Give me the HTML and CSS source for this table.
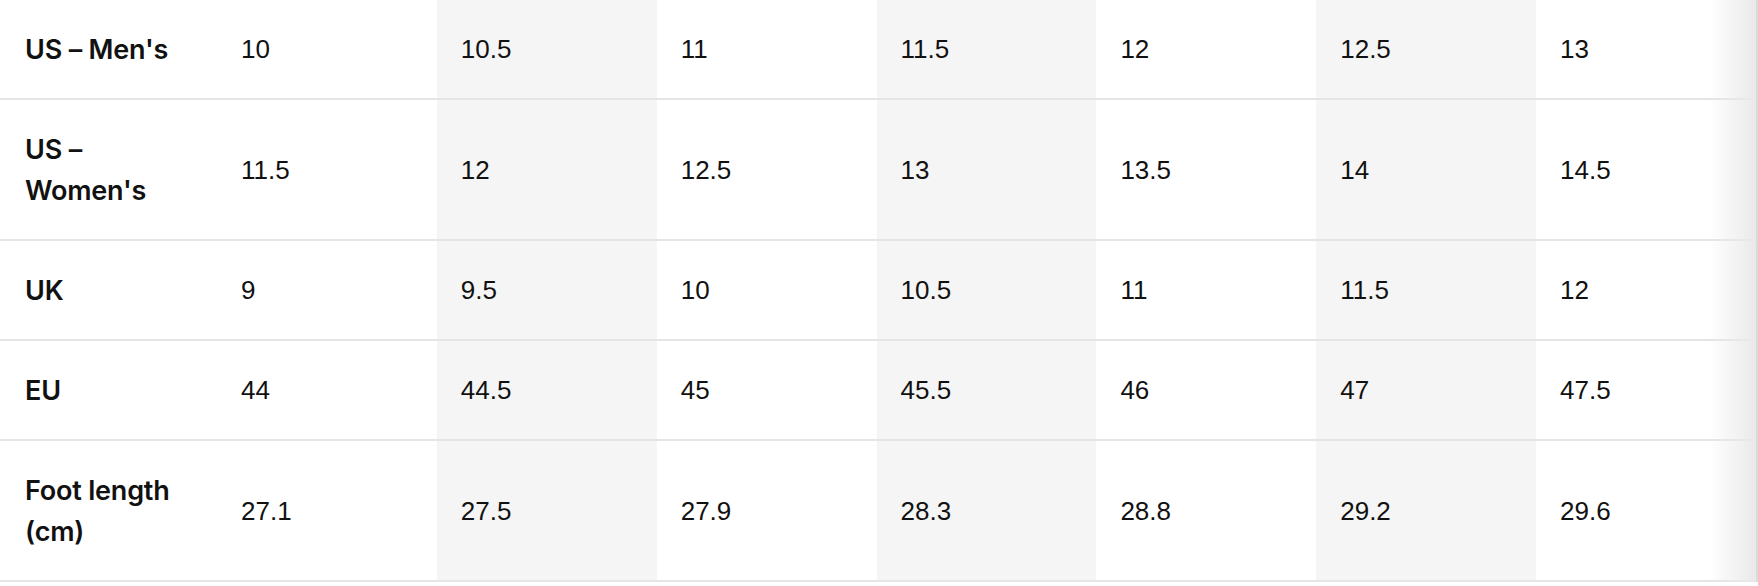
FILE: index.html
```html
<!DOCTYPE html>
<html lang="en">
<head>
<meta charset="utf-8">
<title>Size chart</title>
<link rel="stylesheet" href="styles.css">
</head>
<body>
<div class="chart">
  <table class="sizes">
    <colgroup>
      <col class="col-label">
      <col class="col-data">
      <col class="col-data alt">
      <col class="col-data">
      <col class="col-data alt">
      <col class="col-data">
      <col class="col-data alt">
      <col class="col-data">
    </colgroup>
    <tbody>
      <tr>
        <th>US – Men's</th>
        <td>10</td><td>10.5</td><td>11</td><td>11.5</td><td>12</td><td>12.5</td><td>13</td>
      </tr>
      <tr>
        <th>US – Women's</th>
        <td>11.5</td><td>12</td><td>12.5</td><td>13</td><td>13.5</td><td>14</td><td>14.5</td>
      </tr>
      <tr>
        <th>UK</th>
        <td>9</td><td>9.5</td><td>10</td><td>10.5</td><td>11</td><td>11.5</td><td>12</td>
      </tr>
      <tr>
        <th>EU</th>
        <td>44</td><td>44.5</td><td>45</td><td>45.5</td><td>46</td><td>47</td><td>47.5</td>
      </tr>
      <tr>
        <th>Foot length (cm)</th>
        <td>27.1</td><td>27.5</td><td>27.9</td><td>28.3</td><td>28.8</td><td>29.2</td><td>29.6</td>
      </tr>
    </tbody>
  </table>
  <div class="fade"></div>
</div>
</body>
</html>
```

FILE: styles.css
```css
html, body {
  margin: 0;
  padding: 0;
  background: #ffffff;
}

body {
  font-family: "Liberation Sans", Arial, Helvetica, sans-serif;
  color: #111111;
}

.chart {
  position: relative;
  width: 1756px;
  border-right: 2px solid #dadada;
}

.sizes {
  width: 1756px;
  border-collapse: separate;
  border-spacing: 0;
  table-layout: fixed;
}

.col-label {
  width: 217px;
}

.alt {
  background: #f5f5f5;
}

.sizes th,
.sizes td {
  padding: 29px 24px 28px;
  line-height: 41px;
  vertical-align: middle;
  text-align: left;
  border-bottom: 2px solid #e5e5e5;
}

.sizes th {
  font-family: Inter, "Liberation Sans", Arial, sans-serif;
  font-size: 27px;
  font-weight: 600;
  letter-spacing: -0.2px;
  padding-left: 25px;
  padding-right: 20px;
}

.sizes td {
  font-size: 26px;
  font-weight: 400;
}

.fade {
  position: absolute;
  top: 0;
  right: 0;
  bottom: 0;
  width: 46px;
  background: linear-gradient(to right, rgba(236, 236, 236, 0), #e9e9e9);
  pointer-events: none;
}
```
